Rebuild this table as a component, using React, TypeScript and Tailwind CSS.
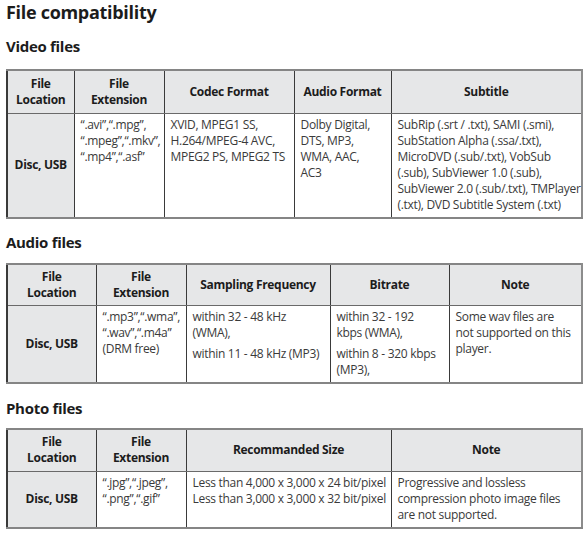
import React from "react";

type Col = { w: number; head: React.ReactNode };
type Cell = React.ReactNode;

const font = { fontFamily: '"Open Sans", "Liberation Sans", sans-serif' };

function Table({ cols, cells, headH, bodyH }: { cols: Col[]; cells: Cell[]; headH: number; bodyH: number }) {
  return (
    <table
      className="border-collapse table-fixed border-2 border-l-[#3a3a3a] border-t-[#858585] border-r-[#8c8c8c] border-b-[#858585] text-[12px] leading-[16px]"
      style={{ width: 575 }}
    >
      <colgroup>
        {cols.map((c, i) => (
          <col key={i} style={{ width: c.w }} />
        ))}
      </colgroup>
      <thead>
        <tr style={{ height: headH }} className="bg-[#e6e7e8]">
          {cols.map((c, i) => (
            <th
              key={i}
              className="border border-[#3a3a3a] border-t-[#858585] border-b-[#6a6a6a] font-bold text-[#1c1c1c] text-center align-middle px-1 p-0"
            >
              {c.head}
            </th>
          ))}
        </tr>
      </thead>
      <tbody>
        <tr style={{ height: bodyH }}>
          <td className="border border-[#3a3a3a] border-b-[#858585] bg-[#e6e7e8] font-bold text-[#1c1c1c] text-center align-middle">
            Disc, USB
          </td>
          {cells.map((c, i) => (
            <td
              key={i}
              className="border border-[#3a3a3a] border-b-[#858585] align-top text-[#3a3a3a] pl-[6px] pr-1 pt-[3px] whitespace-nowrap"
            >
              {c}
            </td>
          ))}
        </tr>
      </tbody>
    </table>
  );
}

function Heading({ children, className }: { children: React.ReactNode; className: string }) {
  return <h2 className={`text-[15px] font-bold text-[#1c1c1c] leading-[20px] ${className}`}>{children}</h2>;
}

export default function App() {
  const two = (a: string, b: string) => (
    <>
      {a}
      <br />
      {b}
    </>
  );

  return (
    <div className="w-[585px] h-[533px] bg-white pl-[6px] overflow-hidden tracking-[-0.3px]" style={font}>
      <h1 className="text-[18px] font-bold text-[#1c1c1c] leading-[22px] pt-[1px]">File compatibility</h1>

      <Heading className="mt-[13px] mb-[13px]">Video files</Heading>
      <Table
        headH={43}
        bodyH={105}
        cols={[
          { w: 67, head: two("File", "Location") },
          { w: 90, head: two("File", "Extension") },
          { w: 130, head: "Codec Format" },
          { w: 97, head: "Audio Format" },
          { w: 191, head: "Subtitle" },
        ]}
        cells={[
          <>
            “.avi”,“.mpg”,
            <br />
            “.mpeg”,“.mkv”,
            <br />
            “.mp4”,“.asf”
          </>,
          <>
            XVID, MPEG1 SS,
            <br />
            H.264/MPEG-4 AVC,
            <br />
            MPEG2 PS, MPEG2 TS
          </>,
          <>
            Dolby Digital,
            <br />
            DTS, MP3,
            <br />
            WMA, AAC,
            <br />
            AC3
          </>,
          <>
            SubRip (.srt / .txt), SAMI (.smi),
            <br />
            SubStation Alpha (.ssa/.txt),
            <br />
            MicroDVD (.sub/.txt), VobSub
            <br />
            (.sub), SubViewer 1.0 (.sub),
            <br />
            SubViewer 2.0 (.sub/.txt), TMPlayer
            <br />
            (.txt), DVD Subtitle System (.txt)
          </>,
        ]}
      />

      <Heading className="mt-[13px] mb-[11px]">Audio files</Heading>
      <Table
        headH={41}
        bodyH={78}
        cols={[
          { w: 89, head: two("File", "Location") },
          { w: 90, head: two("File", "Extension") },
          { w: 144, head: "Sampling Frequency" },
          { w: 119, head: "Bitrate" },
          { w: 133, head: "Note" },
        ]}
        cells={[
          <>
            “.mp3”,“.wma”,
            <br />
            “.wav”,“.m4a”
            <br />
            (DRM free)
          </>,
          <>
            <p>
              within 32 - 48 kHz
              <br />
              (WMA),
            </p>
            <p className="mt-[5px]">within 11 - 48 kHz (MP3)</p>
          </>,
          <>
            <p>
              within 32 - 192
              <br />
              kbps (WMA),
            </p>
            <p className="mt-[5px]">
              within 8 - 320 kbps
              <br />
              (MP3),
            </p>
          </>,
          <>
            Some wav files are
            <br />
            not supported on this
            <br />
            player.
          </>,
        ]}
      />

      <Heading className="mt-[14px] mb-[10px]">Photo files</Heading>
      <Table
        headH={42}
        bodyH={57}
        cols={[
          { w: 89, head: two("File", "Location") },
          { w: 90, head: two("File", "Extension") },
          { w: 205, head: "Recommanded Size" },
          { w: 191, head: "Note" },
        ]}
        cells={[
          <>
            “.jpg”,“.jpeg”,
            <br />
            “.png”,“.gif”
          </>,
          <>
            Less than 4,000 x 3,000 x 24 bit/pixel
            <br />
            Less than 3,000 x 3,000 x 32 bit/pixel
          </>,
          <>
            Progressive and lossless
            <br />
            compression photo image files
            <br />
            are not supported.
          </>,
        ]}
      />
    </div>
  );
}
